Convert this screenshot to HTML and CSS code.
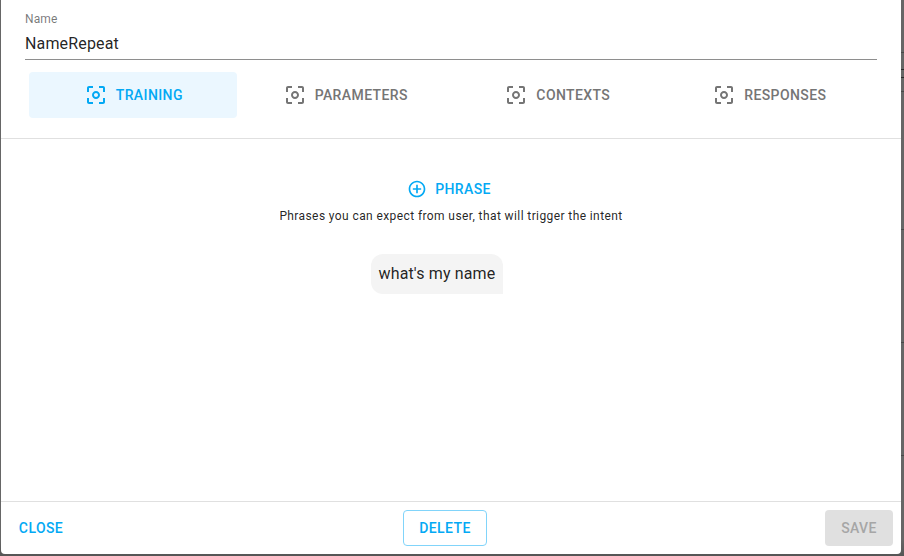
FILE: index.html
```html
<!DOCTYPE html>
<html lang="en">
<head>
<meta charset="utf-8">
<title>Intent</title>
<link rel="stylesheet" href="styles.css">
</head>
<body>
<svg width="0" height="0" class="defs">
  <symbol id="focus" viewBox="0 0 24 24"><path d="M5 15H3v4c0 1.1.9 2 2 2h4v-2H5v-4zM5 5h4V3H5c-1.1 0-2 .9-2 2v4h2V5zm14-2h-4v2h4v4h2V5c0-1.1-.9-2-2-2zm0 16h-4v2h4c1.1 0 2-.9 2-2v-4h-2v4zM12 8c-2.21 0-4 1.79-4 4s1.79 4 4 4 4-1.79 4-4-1.79-4-4-4zm0 6c-1.1 0-2-.9-2-2s.9-2 2-2 2 .9 2 2-.9 2-2 2z"/></symbol>
  <symbol id="add" viewBox="0 0 24 24"><path d="M13 7h-2v4H7v2h4v4h2v-4h4v-2h-4V7zm-1-5C6.48 2 2 6.48 2 12s4.48 10 10 10 10-4.48 10-10S17.52 2 12 2zm0 18c-4.41 0-8-3.59-8-8s3.59-8 8-8 8 3.59 8 8-3.59 8-8 8z"/></symbol>
</svg>
<div class="backdrop">
  <main class="dialog">
    <header class="header">
      <div class="field">
        <label class="label" for="name">Name</label>
        <div class="value" id="name">NameRepeat</div>
      </div>
      <nav class="tabs">
        <div class="tab active"><svg class="icon"><use href="#focus"/></svg><span>TRAINING</span></div>
        <div class="tab"><svg class="icon"><use href="#focus"/></svg><span>PARAMETERS</span></div>
        <div class="tab"><svg class="icon"><use href="#focus"/></svg><span>CONTEXTS</span></div>
        <div class="tab"><svg class="icon"><use href="#focus"/></svg><span>RESPONSES</span></div>
      </nav>
    </header>
    <section class="content">
      <div class="add"><svg class="icon small"><use href="#add"/></svg><span>PHRASE</span></div>
      <div class="caption">Phrases you can expect from user, that will trigger the intent</div>
      <div class="phrase">what's my name</div>
    </section>
    <footer class="footer">
      <div class="button">CLOSE</div>
      <div class="button outlined">DELETE</div>
      <div class="button disabled">SAVE</div>
    </footer>
  </main>
  <aside class="behind">
    <i class="rule"></i><i class="mark"></i><i class="mark low"></i><i class="rule second"></i><i class="rule third"></i><i class="rule fourth"></i><i class="rule fifth"></i>
  </aside>
</div>
</body>
</html>
```
FILE: styles.css
```css
* { box-sizing: border-box; }
body {
  margin: 0;
  font-family: Roboto, "Liberation Sans", sans-serif;
  color: rgba(0, 0, 0, .87);
  overflow: hidden;
}
.defs { display: block; position: absolute; }
.backdrop {
  display: flex;
  width: 904px;
  height: 556px;
  padding-left: 1px;
  background: linear-gradient(#666 540px, #555 556px);
}
.dialog {
  display: flex;
  flex-direction: column;
  width: 900px;
  height: 554px;
  background: #fff;
  border-radius: 0 0 4px 4px;
}
.header {
  height: 139px;
  padding: 10px 24px 0;
  border-bottom: 1px solid #e0e0e0;
}
.field { height: 50px; border-bottom: 1px solid #8e8e8e; }
.label {
  display: block;
  height: 18px;
  line-height: 18px;
  font-size: 12px;
  letter-spacing: .11px;
  color: rgba(0, 0, 0, .54);
}
.value { font-size: 16px; line-height: 19px; padding-top: 6px; letter-spacing: .15px; }
.tabs { display: flex; gap: 4px; padding: 12px 4px 0; }
.tab {
  display: flex;
  align-items: center;
  justify-content: center;
  gap: 8px;
  width: 208px;
  height: 46px;
  padding-left: .6px;
  border-radius: 4px;
  font-size: 14px;
  font-weight: 500;
  letter-spacing: .4px;
  color: #757575;
}
.active { color: #03a9f4; background: #ebf7ff; }
.icon { width: 24px; height: 24px; fill: currentColor; flex: none; }
.small { width: 20px; height: 20px; }
.content {
  flex: 1;
  display: flex;
  flex-direction: column;
  align-items: center;
  padding-top: 32px;
}
.add {
  display: flex;
  align-items: center;
  gap: 8px;
  height: 36px;
  margin-right: 4px;
  font-size: 14px;
  font-weight: 500;
  letter-spacing: .4px;
  color: #03a9f4;
}
.caption { font-size: 12px; line-height: 20px; letter-spacing: .4px; margin-top: -1px; }
.phrase {
  height: 40px;
  width: 132px;
  margin: 28px 28px 0 0;
  padding: 8px 7.5px;
  border-radius: 12px 12px 0 12px;
  background: #f4f4f4;
  font-size: 16px;
  line-height: 24px;
  letter-spacing: .15px;
  white-space: nowrap;
}
.footer {
  display: flex;
  align-items: center;
  justify-content: space-between;
  height: 53px;
  padding: 0 8px;
  border-top: 1px solid #e0e0e0;
}
.button {
  display: flex;
  align-items: center;
  justify-content: center;
  height: 36px;
  width: 64px;
  border-radius: 4px;
  font-size: 14px;
  font-weight: 500;
  letter-spacing: .4px;
  color: #03a9f4;
}
.outlined { width: 84px; margin-right: 8px; border: 1px solid #81d4fa; }
.disabled { width: 68px; background: #e0e0e0; color: #a6a6a6; }
.behind { display: flex; flex-direction: column; width: 3px; padding-top: 52px; }
.rule { height: 1px; background: #484848; }
.mark { height: 1px; margin-top: 16px; background: #292929; }
.low { margin-top: 7px; }
.second { margin-top: 13px; }
.third { margin-top: 137px; }
.fourth { margin-top: 112px; }
.fifth { margin-top: 112px; }
```
